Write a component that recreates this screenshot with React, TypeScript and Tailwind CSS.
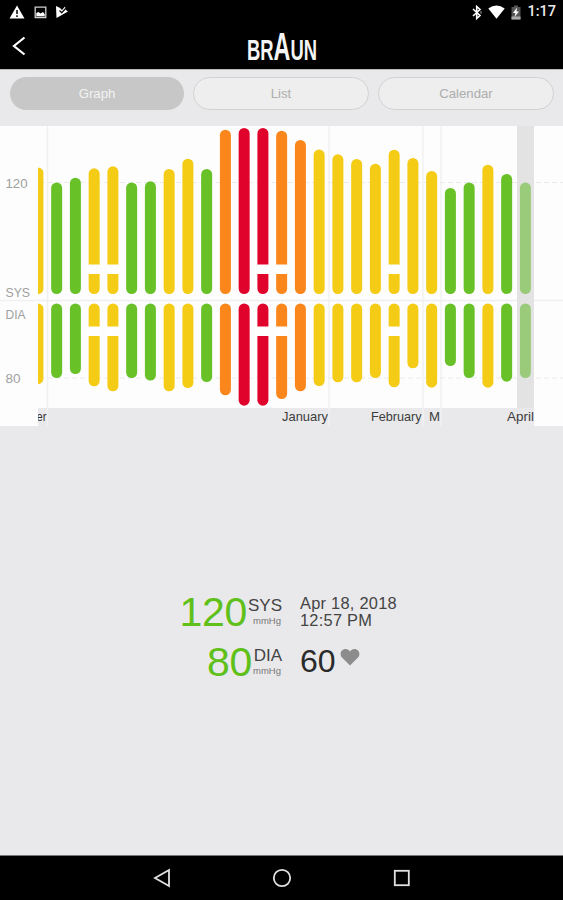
import React from 'react';

type Tone = 'yellow' | 'green' | 'orange' | 'red' | 'faded';

interface Reading {
  sys: number; // top edge of the upper bar
  dia: number; // bottom edge of the lower bar
  tone: Tone;
  gap?: boolean;
}

const TONES: Record<Tone, string> = {
  yellow: '#f4cb15',
  green: '#68c127',
  orange: '#fa861c',
  red: '#e0042c',
  faded: '#9acb7b',
};

const READINGS: Reading[] = [
  { sys: 41.5, dia: 258, tone: 'yellow' },
  { sys: 56.5, dia: 252, tone: 'green' },
  { sys: 51.7, dia: 248, tone: 'green' },
  { sys: 42.3, dia: 260.3, tone: 'yellow', gap: true },
  { sys: 40.3, dia: 265.3, tone: 'yellow', gap: true },
  { sys: 56.5, dia: 252, tone: 'green' },
  { sys: 55.3, dia: 254.5, tone: 'green' },
  { sys: 43, dia: 265.3, tone: 'yellow' },
  { sys: 32.7, dia: 262, tone: 'yellow' },
  { sys: 43, dia: 256, tone: 'green' },
  { sys: 3.7, dia: 269.3, tone: 'orange' },
  { sys: 2, dia: 279.7, tone: 'red' },
  { sys: 2, dia: 279.7, tone: 'red', gap: true },
  { sys: 4.7, dia: 273, tone: 'orange', gap: true },
  { sys: 14, dia: 265.3, tone: 'orange' },
  { sys: 23.5, dia: 260, tone: 'yellow' },
  { sys: 28.3, dia: 256.3, tone: 'yellow' },
  { sys: 33, dia: 256.3, tone: 'yellow' },
  { sys: 37.7, dia: 252, tone: 'yellow' },
  { sys: 23.7, dia: 261.3, tone: 'yellow', gap: true },
  { sys: 32, dia: 242.3, tone: 'yellow' },
  { sys: 45, dia: 261.7, tone: 'yellow' },
  { sys: 62, dia: 240, tone: 'green' },
  { sys: 56.5, dia: 252, tone: 'green' },
  { sys: 38.7, dia: 261.7, tone: 'yellow' },
  { sys: 48, dia: 255.7, tone: 'green' },
  { sys: 56.5, dia: 252, tone: 'faded' },
];

const MONTHS = [
  { label: 'January', x: 282, width: 46 },
  { label: 'February', x: 371, width: 50.5 },
  { label: 'M', x: 429, width: 11 },
  { label: 'April', x: 507, width: 27 },
];

const AXIS = [
  { label: '120', y: 62, width: 22 },
  { label: 'SYS', y: 171, width: 24.5 },
  { label: 'DIA', y: 193, width: 20 },
  { label: '80', y: 257, width: 15 },
];

const StatusBar = () => (
  <div className="flex h-6 items-center justify-between pl-[9px] pr-[7px]">
    <div className="flex items-center gap-[9px]">
      <svg width="16" height="14" viewBox="0 0 16 14">
        <path d="M8 0.5 15.5 13.5H.5Z" fill="#fff" />
        <path d="M8 5v4M8 10.3v1.7" stroke="#000" strokeWidth="1.5" />
      </svg>
      <svg width="13" height="13" viewBox="0 0 13 13">
        <path d="M1.2 1.2h10.6v10.3H1.2Z" fill="none" stroke="#d0d0d0" strokeWidth="1.3" />
        <path d="M2.3 10.3V7l2.2-1 2 1.6L9 6l1.7 2v2.3Z" fill="#fff" />
      </svg>
      <svg width="14" height="14" viewBox="0 0 14 14" className="-ml-px">
        <path d="M1 1 5 3 7 5 10 1.500 11 5 13 6.500 1.500 13Z" fill="#fff" />
        <path d="m4.500 5.500 2.200 2.200L11.500 2.500" fill="none" stroke="#111" strokeWidth="1.300" />
      </svg>
    </div>
    <div className="flex items-center">
      <svg width="10" height="15" viewBox="0 0 10 15">
        <path d="m1 4 7 6.500-3.300 3V1.500L8 4.500l-7 6.500" fill="none" stroke="#fff" strokeWidth="1.600" />
        <path d="M9 6.300v2.200" stroke="#bbb" />
      </svg>
      <svg width="17" height="14" viewBox="0 0 17 14" className="ml-[6px]">
        <path d="M.3 3.500Q8.500-2.500 16.700 3.500L8.500 13.800Z" fill="#fff" />
      </svg>
      <svg width="10" height="15" viewBox="0 0 10 15" className="ml-[6px]">
        <path d="M.5 2H3V.5h4V2h2.500v12.500H.5Z" fill="#555" />
        <path d="M.5 11.500h9v3h-9Z" fill="#aaa" />
        <path d="M6 2.500 2 8h2.500L3.500 12 8 6.500H5.500Z" fill="#fff" />
      </svg>
      <span className="ml-[6px] font-[Roboto,sans-serif] text-[14.500px] font-medium leading-[18px] text-[#ececec]">1:17</span>
    </div>
  </div>
);

const Logo = () => (
  <svg
    width="68"
    height="30"
    viewBox="0 0 68 30"
    fill="#f4f4f4"
    overflow="visible"
    className="overflow-visible font-['Liberation_Sans_Narrow','Liberation_Sans',sans-serif] text-[30px] font-bold"
  >
    <text x="-1" y="28" textLength="70" lengthAdjust="spacingAndGlyphs">
      BR<tspan className="text-[38px]">A</tspan>UN
    </text>
  </svg>
);

const Header = () => (
  <header className="h-[69px] bg-black">
    <StatusBar />
    <div className="grid h-[45px] grid-cols-[1fr_68px_1fr] items-start">
      <svg width="14" height="20" viewBox="0 0 14 20" className="ml-[12px] mt-[12px]">
        <path d="M12.500 1.500 2 10l10.500 8.500" fill="none" stroke="#fff" strokeWidth="2.200" />
      </svg>
      <div className="mt-[8px]">
        <Logo />
      </div>
    </div>
  </header>
);

const Tabs = () => (
  <nav className="flex h-[57px] gap-[9px] border-t border-[#b8b8b8] pl-[10px] pr-[9px] pt-[7px] text-[13.200px]">
    <button className="h-[33px] flex-1 rounded-full bg-[#c7c7c7] text-[#f3f3f3]">Graph</button>
    <button className="h-[33px] flex-1 rounded-full border border-[#d2d2d2] bg-[#eeeeee] text-[#adadad]">List</button>
    <button className="h-[33px] flex-1 rounded-full border border-[#d2d2d2] bg-[#eeeeee] text-[#adadad]">Calendar</button>
  </nav>
);

const Bar = ({ reading, index }: { reading: Reading; index: number }) => {
  const x = 32.4 + index * 18.75;
  const color = TONES[reading.tone];
  return (
    <g>
      <rect x={x} y={reading.sys} width="11" height={168 - reading.sys} rx="5.5" fill={color} />
      <rect x={x} y="177.5" width="11" height={reading.dia - 177.5} rx="5.5" fill={color} />
      {reading.gap && (
        <>
          <rect x={x - 1} y="138.5" width="13" height="9.5" fill="#fefefe" />
          <rect x={x - 1} y="200.5" width="13" height="9.5" fill="#fefefe" />
        </>
      )}
    </g>
  );
};

const Chart = () => (
  <svg width="563" height="300" viewBox="0 0 563 300" className="block">
    <rect width="563" height="282" fill="#fdfdfd" />
    <rect y="282" x="38" width="496" height="18" fill="#e9e9eb" />
    {[47.5, 329, 423, 441].map((x) => (
      <path key={x} d={`M${x} 0V300`} stroke="#f0f0f1" strokeWidth="1.5" />
    ))}
    <path d="M38 174.500H563" stroke="#efefef" strokeWidth="1.5" />
    <path d="M32 56.500H563M32 252H563" stroke="#ebebeb" strokeDasharray="5 3" />
    <rect x="517" width="17" height="282" fill="#e3e3e4" />
    {READINGS.map((reading, i) => (
      <Bar key={i} reading={reading} index={i} />
    ))}
    <text x="36.5" y="295" fontSize="13" fill="#333" textLength="10" lengthAdjust="spacingAndGlyphs">er</text>
    {MONTHS.map((m) => (
      <text key={m.label} x={m.x} y="295" fontSize="13" fill="#3c3c3c" textLength={m.width} lengthAdjust="spacingAndGlyphs">
        {m.label}
      </text>
    ))}
    <rect width="38" height="300" fill="#fdfdfd" />
    <path d="M0 174.500H38" stroke="#f1f1f1" strokeWidth="1.5" />
    <rect x="534" y="282" width="29" height="18" fill="#fdfdfd" />
    {AXIS.map((a) => (
      <text key={a.label} x="5.5" y={a.y} fontSize="13" fill="#a0a0a0" textLength={a.width} lengthAdjust="spacingAndGlyphs">
        {a.label}
      </text>
    ))}
  </svg>
);

interface ValueProps {
  value: string;
  label: string;
}

const Value = ({ value, label }: ValueProps) => (
  <div className="flex justify-end">
    <span className="mr-[1px] text-[41px] leading-[42px] tracking-[-0.300px] text-[#5fc019]">{value}</span>
    <div className="flex flex-col items-end pt-[6px]">
      <span className="text-[17px] leading-[17px] text-[#444]">{label}</span>
      <span className="pr-[1px] text-[9.500px] leading-[13px] text-[#777]">mmHg</span>
    </div>
  </div>
);

const Summary = () => (
  <section className="grid grid-cols-[282px_1fr] gap-x-[18px] gap-y-[8px] pt-[165px]">
    <Value value="120" label="SYS" />
    <div className="pt-[4px] text-[16.400px] leading-[17px] tracking-[0.250px] text-[#444]">
      <p>Apr 18, 2018</p>
      <p>12:57 PM</p>
    </div>
    <Value value="80" label="DIA" />
    <div className="flex items-start gap-[4px] pt-[4px]">
      <span className="text-[32px] leading-[32px] text-[#2a2a2a]">60</span>
      <svg width="20" height="18" viewBox="0 0 20 18" className="mt-[3px]">
        <path d="M10 17.500 2 9.500C-2.500 4 5 -2.500 10 3.500 15 -2.500 22.500 4 18 9.500Z" fill="#8c8c8c" />
      </svg>
    </div>
  </section>
);

const NavBar = () => (
  <footer className="flex h-[45px] items-center justify-center gap-[101px] border-t border-[#777] bg-black">
    <svg width="18" height="20" viewBox="0 0 18 20" fill="none" stroke="#e0e0e0" strokeWidth="1.8">
      <path d="M16 2v16L2 10Z" />
    </svg>
    <svg width="20" height="20" viewBox="0 0 20 20" fill="none" stroke="#e0e0e0" strokeWidth="1.8">
      <circle cx="10" cy="10" r="8.2" />
    </svg>
    <svg width="18" height="20" viewBox="0 0 18 20" fill="none" stroke="#e0e0e0" strokeWidth="1.8">
      <rect x="1.8" y="2.8" width="14" height="14.4" />
    </svg>
  </footer>
);

export default function App() {
  return (
    <div className="flex h-[900px] w-[563px] flex-col overflow-hidden bg-[#e9e9eb] font-['Liberation_Sans',sans-serif]">
      <Header />
      <Tabs />
      <Chart />
      <main className="flex-1">
        <Summary />
      </main>
      <NavBar />
    </div>
  );
}
